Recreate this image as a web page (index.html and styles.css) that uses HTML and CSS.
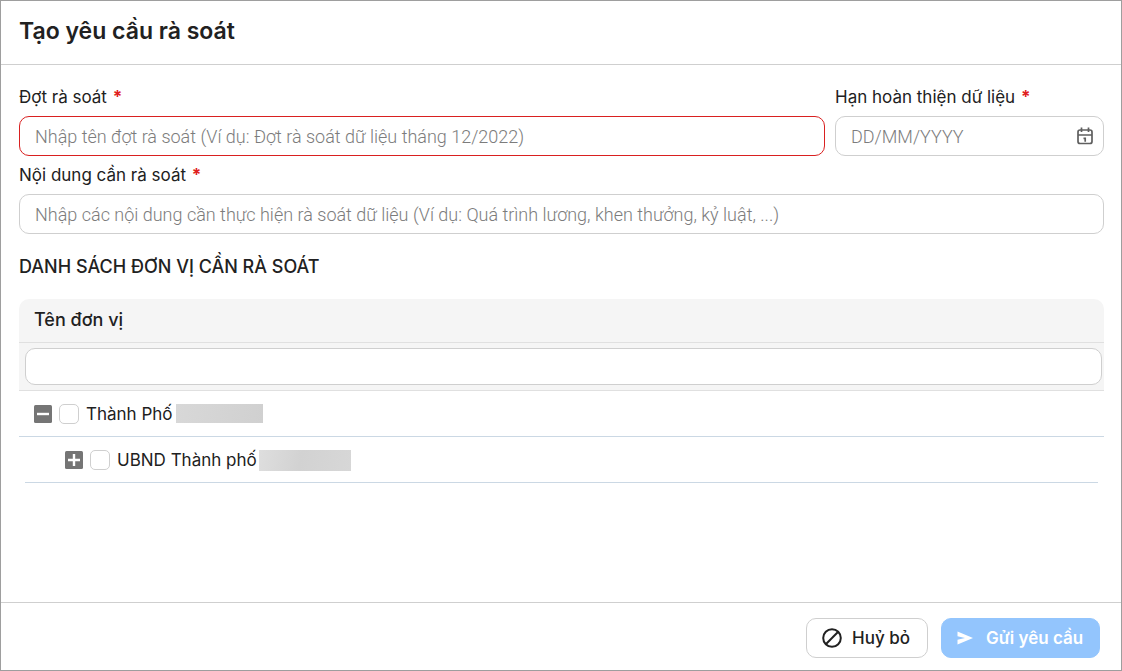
FILE: index.html
```html
<!DOCTYPE html>
<html lang="vi">
<head>
<meta charset="utf-8">
<meta name="viewport" content="width=device-width, initial-scale=1">
<title>Tạo yêu cầu rà soát</title>
<link rel="stylesheet" href="styles.css">
</head>
<body>
<form class="dialog">
  <header class="dialog-header">
    <h1 class="dialog-title">Tạo yêu cầu rà soát</h1>
  </header>
  <main class="dialog-body">
    <div class="field-row">
      <div class="field field-wide">
        <label class="label" for="period">Đợt rà soát <span class="required">*</span></label>
        <input class="control control-error" id="period" type="text" placeholder="Nhập tên đợt rà soát (Ví dụ: Đợt rà soát dữ liệu tháng 12/2022)">
      </div>
      <div class="field field-date">
        <label class="label" for="deadline">Hạn hoàn thiện dữ liệu <span class="required">*</span></label>
        <div class="control date-control">
          <input class="date-input" id="deadline" type="text" placeholder="DD/MM/YYYY">
          <button class="icon-button" type="button" aria-label="Chọn ngày">
            <svg width="16" height="18" viewBox="0 0 16 18" fill="none" stroke="#5f5f5f" stroke-width="1.7">
              <rect x="1" y="3" width="14" height="13.5" rx="2"/>
              <path d="M4.5 0.5v4.5M11.5 0.5v4.5M1 8h14M6.5 11.4h1.7v3.4"/>
            </svg>
          </button>
        </div>
      </div>
    </div>
    <div class="field">
      <label class="label" for="content">Nội dung cần rà soát <span class="required">*</span></label>
      <input class="control" id="content" type="text" placeholder="Nhập các nội dung cần thực hiện rà soát dữ liệu (Ví dụ: Quá trình lương, khen thưởng, kỷ luật, ...)">
    </div>
    <h2 class="section-title">DANH SÁCH ĐƠN VỊ CẦN RÀ SOÁT</h2>
    <table class="units">
      <thead>
        <tr><th class="units-head" scope="col">Tên đơn vị</th></tr>
        <tr><td class="units-filter"><input class="filter-input" type="text" aria-label="Lọc tên đơn vị"></td></tr>
      </thead>
      <tbody>
        <tr>
          <td class="unit-cell">
            <div class="unit">
              <button class="toggle" type="button" aria-label="Thu gọn" aria-expanded="true">
                <svg width="18" height="18" viewBox="0 0 18 18"><rect width="18" height="18" rx="1.5" fill="#757575"/><path d="M3 9h12" stroke="#fff" stroke-width="2.4"/></svg>
              </button>
              <input class="check" type="checkbox" id="unit-1">
              <label class="unit-name" for="unit-1">Thành Phố</label>
              <span class="redacted redacted-city"></span>
            </div>
          </td>
        </tr>
        <tr>
          <td class="unit-cell unit-cell-last">
            <div class="unit unit-child">
              <button class="toggle" type="button" aria-label="Mở rộng" aria-expanded="false">
                <svg width="18" height="18" viewBox="0 0 18 18"><rect width="18" height="18" rx="1.5" fill="#757575"/><path d="M3 9h12M9 3v12" stroke="#fff" stroke-width="2.4"/></svg>
              </button>
              <input class="check" type="checkbox" id="unit-2">
              <label class="unit-name" for="unit-2">UBND Thành phố</label>
              <span class="redacted redacted-committee"></span>
            </div>
          </td>
        </tr>
      </tbody>
    </table>
  </main>
  <footer class="dialog-footer">
    <button class="button button-cancel" type="button">
      <svg width="20" height="20" viewBox="0 0 20 20" fill="none" stroke="#212121" stroke-width="2"><circle cx="10" cy="10" r="8.8"/><path d="M3.8 16.2L16.2 3.8"/></svg>
      Huỷ bỏ
    </button>
    <button class="button button-submit" type="submit" disabled>
      <svg width="16" height="14" viewBox="0 0 16 14"><path d="M0.5 0.5L16 7L0.5 13.5V8.7L8 7L0.5 5.3Z" fill="#fff"/></svg>
      Gửi yêu cầu
    </button>
  </footer>
</form>
</body>
</html>
```

FILE: styles.css
```css
*, *::before, *::after { box-sizing: border-box; }

body {
  margin: 0;
  background: #fff;
  color: #212121;
  font-family: Inter, "Noto Sans", sans-serif;
  font-size: 17px;
}

button, input { font: inherit; color: inherit; }

.dialog {
  display: flex;
  flex-direction: column;
  min-height: 100vh;
  border: 1px solid #9e9e9e;
}

.dialog-header {
  padding: 14px 18px 17px;
  border-bottom: 1px solid #cfcfcf;
}

.dialog-title {
  margin: 0;
  font-size: 23px;
  font-weight: 600;
  line-height: 32px;
}

.dialog-body {
  flex: 1;
  padding: 13px 17px 24px 18px;
}

.field-row { display: flex; gap: 10px; }
.field { display: flex; flex-direction: column; min-width: 0; }
.field-wide { flex: 3; }
.field-date { flex: 0 0 269px; }

.label { line-height: 38px; }
.required { margin-left: 1px; color: #e02020; font-weight: 700; }

.control {
  width: 100%;
  height: 40px;
  padding: 0 15px;
  border: 1px solid #cfcfcf;
  border-radius: 10px;
  background: #fff;
  font-family: Roboto, sans-serif;
  font-size: 18px;
  font-weight: 300;
  outline: none;
}

.control-error { border-color: #d92020; }

.date-control {
  display: flex;
  align-items: center;
  padding-right: 10px;
}

.date-input {
  flex: 1;
  min-width: 0;
  padding: 0;
  border: 0;
  outline: none;
  background: none;
}

::placeholder { color: #7c7c7c; opacity: 1; }

.icon-button, .toggle {
  display: flex;
  padding: 0;
  border: 0;
  background: none;
}

.section-title {
  margin: 20px 0;
  font-size: 18px;
  font-weight: 500;
  line-height: 25px;
}

.units {
  width: 100%;
  border-spacing: 0;
}

.units-head {
  height: 44px;
  padding: 0 15px 2px;
  border-bottom: 1px solid #e0e0e0;
  border-radius: 10px 10px 0 0;
  background: #f5f5f5;
  font-size: 18px;
  font-weight: 500;
  text-align: left;
}

.units-filter {
  height: 48px;
  padding: 5px 2px 5px 6px;
  border-bottom: 1px solid #e0e0e0;
  background: #f5f5f5;
}

.filter-input {
  display: block;
  width: 100%;
  height: 37px;
  padding: 0 10px;
  border: 1px solid #cfcfcf;
  border-radius: 10px;
  background: #fff;
  outline: none;
}

.unit-cell {
  height: 46px;
  padding: 0;
  border-bottom: 1px solid #cbd8e4;
}

.unit-cell-last {
  border-bottom: 0;
  background: linear-gradient(#cbd8e4, #cbd8e4) center bottom / calc(100% - 12px) 1px no-repeat;
}

.unit {
  display: flex;
  align-items: center;
  padding-left: 15px;
}

.unit-child { padding-left: 46px; }

.check {
  flex: none;
  width: 20px;
  height: 20px;
  margin: 0 7px;
  border: 1px solid #cfcfcf;
  border-radius: 5px;
  background: #fff;
  appearance: none;
}

.check:checked { background: #1e88e5; }

.redacted { background: linear-gradient(100deg, #d8d8d8, #d0d0d0); }
.redacted-city { width: 87px; height: 19px; margin-left: 3px; }
.redacted-committee { width: 92px; height: 21px; margin-left: 2px; background: linear-gradient(100deg, #dedede, #d2d2d2 45%, #d7d7d7); }

.dialog-footer {
  display: flex;
  justify-content: flex-end;
  gap: 13px;
  padding: 15px 21px 12px;
  border-top: 1px solid #cfcfcf;
}

.button {
  display: flex;
  align-items: center;
  height: 40px;
  padding: 0 15px;
  border: 1px solid #cfcfcf;
  border-radius: 10px;
  background: #fff;
}

.button-cancel {
  gap: 10px;
  min-width: 122px;
  font-weight: 500;
}

.button-submit {
  gap: 13px;
  min-width: 159px;
  border-color: #93c5fd;
  background: #93c5fd;
  color: #fff;
  font-weight: 600;
}
```
